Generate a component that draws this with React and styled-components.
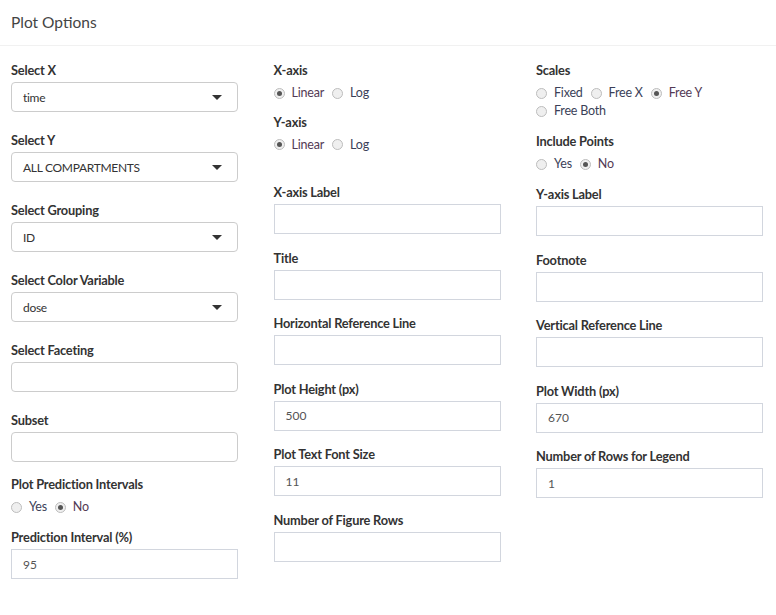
import React from 'react';
import styled, { createGlobalStyle } from 'styled-components';

const GlobalStyle = createGlobalStyle`
  body {
    margin: 0;
    background: #fff;
    font-family: 'Lato', 'Open Sans', sans-serif;
    color: #333;
  }
`;

const Box = styled.div`
  width: 776px;
  background: #fff;
`;

const Header = styled.div`
  height: 46px;
  box-sizing: border-box;
  padding: 12px 11px 0;
  border-bottom: 1px solid #f1f1f1;
  font-size: 15.5px;
  line-height: 20px;
  color: #444;
`;

const Body = styled.div`
  display: grid;
  grid-template-columns: 227px 227px 227px;
  column-gap: 35.5px;
  padding: 14px 11px 0;
`;

const Column = styled.div`
  display: flex;
  flex-direction: column;
`;

const Group = styled.div`
  margin-bottom: ${p => p.$gap}px;
`;

const Label = styled.div`
  font-size: 12.8px;
  font-weight: 700;
  line-height: 18px;
  color: #333;
  padding-top: 1px;
  margin-bottom: 3px;
  letter-spacing: -0.2px;
`;

const SelectBox = styled.div`
  height: 30px;
  box-sizing: border-box;
  border: 1px solid #ccc;
  border-radius: 4px;
  display: flex;
  align-items: center;
  justify-content: space-between;
  padding: 0 15px 0 11px;
  font-size: 12px;
  letter-spacing: -0.3px;
  color: #333;
`;

const Caret = styled.span`
  width: 0;
  height: 0;
  border-left: 5px solid transparent;
  border-right: 5px solid transparent;
  border-top: 5px solid #333;
`;

const TextBox = styled.div`
  height: 30px;
  box-sizing: border-box;
  border: 1px solid #d2d6de;
  display: flex;
  align-items: center;
  padding: 0 11px;
  font-size: 12px;
  color: #555;
`;

const RadioRow = styled.div`
  display: flex;
  flex-wrap: wrap;
  padding-top: 2px;
  line-height: 18px;
  font-size: 12.5px;
  letter-spacing: -0.2px;
`;

const RadioItem = styled.label`
  display: flex;
  align-items: center;
  margin-right: 8px;
  color: ${p => (p.$checked ? '#533a55' : '#3b3f58')};
`;

const Circle = styled.span`
  width: 11px;
  height: 11px;
  box-sizing: border-box;
  border-radius: 50%;
  border: 1px solid #bdbdbd;
  background: #efefef;
  margin: 0 7px 0 0;
  display: flex;
  align-items: center;
  justify-content: center;
  &::after {
    content: '';
    display: ${p => (p.$checked ? 'block' : 'none')};
    width: 5px;
    height: 5px;
    border-radius: 50%;
    background: #555;
  }
`;

const Select = ({ label, value, gap = 18 }) => (
  <Group $gap={gap}>
    <Label>{label}</Label>
    <SelectBox>
      <span>{value}</span>
      {value !== undefined && <Caret />}
    </SelectBox>
  </Group>
);

const Text = ({ label, value, gap = 13.5 }) => (
  <Group $gap={gap}>
    <Label>{label}</Label>
    <TextBox>{value}</TextBox>
  </Group>
);

const Radios = ({ label, options, checked, gap = 13, width }) => (
  <Group $gap={gap}>
    <Label>{label}</Label>
    <RadioRow style={width ? { width } : undefined}>
      {options.map(o => (
        <RadioItem key={o} $checked={o === checked}>
          <Circle $checked={o === checked} />
          {o}
        </RadioItem>
      ))}
    </RadioRow>
  </Group>
);

export default function App() {
  return (
    <Box>
      <GlobalStyle />
      <Header>Plot Options</Header>
      <Body>
        <Column>
          <Select label="Select X" value="time" />
          <Select label="Select Y" value="ALL COMPARTMENTS" />
          <Select label="Select Grouping" value="ID" />
          <Select label="Select Color Variable" value="dose" />
          <Select label="Select Faceting" />
          <Select label="Subset" gap={12} />
          <Radios label="Plot Prediction Intervals" options={['Yes', 'No']} checked="No" gap={11} />
          <Text label="Prediction Interval (%)" value="95" />
        </Column>
        <Column>
          <Radios label="X-axis" options={['Linear', 'Log']} checked="Linear" gap={9.5} />
          <Radios label="Y-axis" options={['Linear', 'Log']} checked="Linear" gap={28.5} />
          <Text label="X-axis Label" />
          <Text label="Title" />
          <Text label="Horizontal Reference Line" />
          <Text label="Plot Height (px)" value="500" />
          <Text label="Plot Text Font Size" value="11" />
          <Text label="Number of Figure Rows" />
        </Column>
        <Column>
          <Radios
            label="Scales"
            options={['Fixed', 'Free X', 'Free Y', 'Free Both']}
            checked="Free Y"
            width={200}
            gap={11}
          />
          <Radios label="Include Points" options={['Yes', 'No']} checked="No" gap={11} />
          <Text label="Y-axis Label" />
          <Text label="Footnote" />
          <Text label="Vertical Reference Line" />
          <Text label="Plot Width (px)" value="670" />
          <Text label="Number of Rows for Legend" value="1" />
        </Column>
      </Body>
    </Box>
  );
}
